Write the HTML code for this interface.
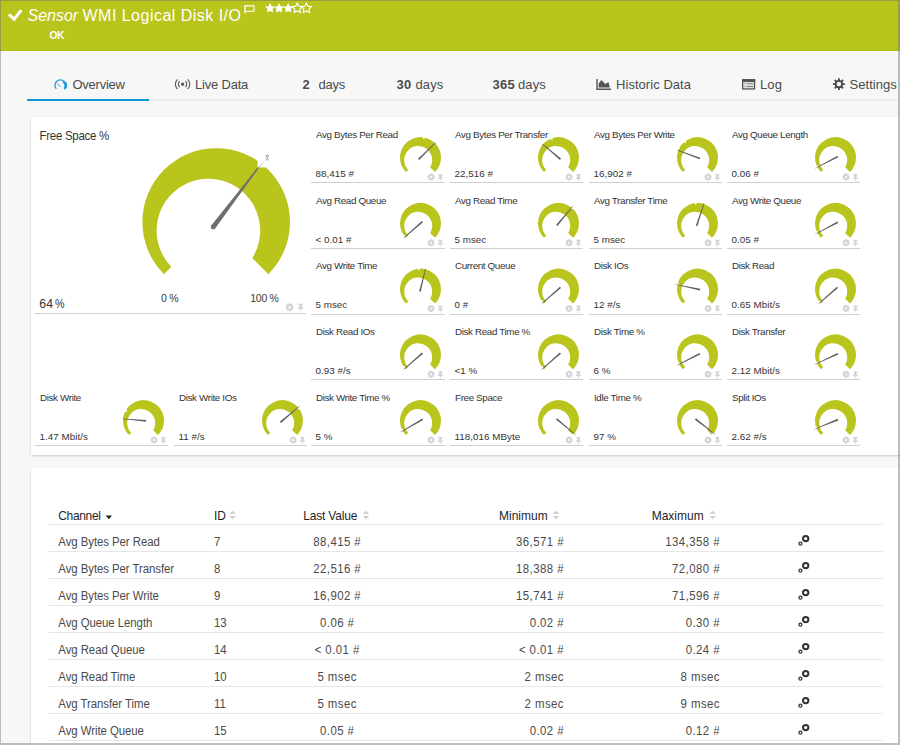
<!DOCTYPE html><html><head><meta charset="utf-8"><style>
*{box-sizing:border-box}
html,body{margin:0;padding:0;width:900px;height:745px;overflow:hidden;background:#f7f7f7;font-family:"Liberation Sans",sans-serif;}
.a{position:absolute;white-space:nowrap;line-height:1}
#frame{position:absolute;left:0;top:0;width:900px;height:745px;border-style:solid;border-color:rgba(110,110,110,.45);border-width:1px 2px 2px 1px;pointer-events:none;z-index:10}
#hdr{position:absolute;left:0;top:0;width:900px;height:51px;background:#b9c41c;border-bottom:1px solid #b3bd12}
.tab{position:absolute;font-size:13px;color:#4b4b4b;line-height:1}
.tab b{color:#4b4b4b}
.panel{position:absolute;background:#fff;box-shadow:0 1px 2px rgba(0,0,0,.18)}
.gt{position:absolute;font-size:9.8px;color:#333;letter-spacing:-0.35px;line-height:1;white-space:nowrap}
.gl{position:absolute;height:1px;background:#cfcfcf}
.th{position:absolute;font-size:12px;color:#1f1f2e;transform:scaleY(1.05);transform-origin:0 10.2px;line-height:1;white-space:nowrap}
.td{position:absolute;font-size:11.4px;color:#4a4a4a;transform:scaleY(1.15);transform-origin:0 9.65px;line-height:1;white-space:nowrap}
.tl{position:absolute;left:49px;width:834px;height:1px;background:#e6e6e6}
</style></head><body>

<div id="hdr"></div>
<svg class="a" style="left:0;top:0" width="900" height="51"><path d="M8.9,14.3 L14.1,19.2 L21.3,10.1" fill="none" stroke="#fff" stroke-width="3"/></svg>
<div class="a" style="left:27.5px;top:8px;font-size:16px;color:#fff"><i style="letter-spacing:0px">Sensor</i></div><div class="a" style="left:82.5px;top:8px;font-size:16px;color:#fff;letter-spacing:0.48px">WMI Logical Disk I/O</div>
<div class="a" style="left:49.6px;top:30.6px;font-size:10.2px;color:#fff;font-weight:bold;letter-spacing:-0.4px">OK</div>
<svg class="a" style="left:242.6px;top:4px" width="14" height="12"><path d="M2,1 V9.6" fill="none" stroke="#fff" stroke-width="1.4"/><path d="M2.6,1.9 H11 V7.2 H2.6" fill="none" stroke="#fff" stroke-width="1.1"/></svg>
<svg class="a" style="left:262px;top:0px" width="60" height="20"><polygon points="8.00,3.00 6.44,6.16 2.96,6.66 5.48,9.12 4.88,12.59 8.00,10.95 11.12,12.59 10.52,9.12 13.04,6.66 9.56,6.16" fill="#fff"/><polygon points="17.10,3.00 15.54,6.16 12.06,6.66 14.58,9.12 13.98,12.59 17.10,10.95 20.22,12.59 19.62,9.12 22.14,6.66 18.66,6.16" fill="#fff"/><polygon points="26.20,3.00 24.64,6.16 21.16,6.66 23.68,9.12 23.08,12.59 26.20,10.95 29.32,12.59 28.72,9.12 31.24,6.66 27.76,6.16" fill="#fff"/><polygon points="35.30,3.00 33.74,6.16 30.26,6.66 32.78,9.12 32.18,12.59 35.30,10.95 38.42,12.59 37.82,9.12 40.34,6.66 36.86,6.16" fill="none" stroke="#fff" stroke-width="1.1"/><polygon points="44.40,3.00 42.84,6.16 39.36,6.66 41.88,9.12 41.28,12.59 44.40,10.95 47.52,12.59 46.92,9.12 49.44,6.66 45.96,6.16" fill="none" stroke="#fff" stroke-width="1.1"/></svg>
<div class="a" style="left:27px;top:99px;width:871px;height:2px;background:#ebebeb"></div>
<div class="a" style="left:27px;top:99px;width:122px;height:2px;background:#0898d6"></div>
<svg class="a" style="left:53px;top:78px" width="16" height="13"><path d="M3.3,10.9 A5.4,5.4 0 1 1 11.4,10.9" fill="none" stroke="#1a9bd7" stroke-width="1.3"/><path d="M11.4,10.9 A5.4,5.4 0 0 0 12.4,5" fill="none" stroke="#1a9bd7" stroke-width="2.4"/><path d="M10,3.6 A5.4,5.4 0 0 1 12.9,7.5" fill="none" stroke="#1a9bd7" stroke-width="2.2"/><line x1="7.6" y1="8.6" x2="4.4" y2="5.8" stroke="#1a9bd7" stroke-width="1"/></svg>
<div class="tab" style="left:72.5px;top:78px;letter-spacing:-0.25px">Overview</div>
<svg class="a" style="left:175px;top:78px" width="16" height="13"><circle cx="7.6" cy="6.2" r="1.6" fill="#555"/><path d="M4.8,3.2 A4,4 0 0 0 4.8,9.2 M10.4,3.2 A4,4 0 0 1 10.4,9.2 M2.6,1.4 A6.4,6.4 0 0 0 2.6,11 M12.6,1.4 A6.4,6.4 0 0 1 12.6,11" fill="none" stroke="#555" stroke-width="1.1"/></svg>
<div class="tab" style="left:195px;top:78px;letter-spacing:-0.2px">Live Data</div>
<div class="tab" style="left:302.5px;top:78px"><b>2</b></div><div class="tab" style="left:318.5px;top:78px;letter-spacing:-0.2px">days</div>
<div class="tab" style="left:396.5px;top:78px;letter-spacing:0.2px"><b>30</b></div><div class="tab" style="left:415.5px;top:78px;letter-spacing:0.1px">days</div>
<div class="tab" style="left:492.5px;top:78px;letter-spacing:0.3px"><b>365</b></div><div class="tab" style="left:518px;top:78px;letter-spacing:0.1px">days</div>
<svg class="a" style="left:596px;top:78px" width="16" height="13"><path d="M1,1 V11.3 H15" fill="none" stroke="#555" stroke-width="1.4"/><path d="M2.6,9.6 L2.6,5.8 L5.3,2.1 L9.3,6.1 L12.5,3.9 L13.8,9.6Z" fill="#555"/></svg>
<div class="tab" style="left:616px;top:78px;letter-spacing:0.05px">Historic Data</div>
<svg class="a" style="left:742px;top:78px" width="15" height="13"><rect x="0.65" y="1.65" width="11.9" height="9.3" fill="#e0e0e0" stroke="#555" stroke-width="1.3"/><rect x="0.6" y="1.4" width="12.6" height="2.6" fill="#555"/><line x1="4.8" y1="5.7" x2="11" y2="5.7" stroke="#777" stroke-width="0.9"/><line x1="4.8" y1="8.5" x2="11" y2="8.5" stroke="#777" stroke-width="0.9"/><line x1="2.5" y1="5.7" x2="3.8" y2="5.7" stroke="#999" stroke-width="0.9"/><line x1="2.5" y1="8.5" x2="3.8" y2="8.5" stroke="#999" stroke-width="0.9"/></svg>
<div class="tab" style="left:760px;top:78px;letter-spacing:0.1px">Log</div>
<svg class="a" style="left:832px;top:77px" width="15" height="14"><line x1="9.85" y1="7.10" x2="12.80" y2="7.10" stroke="#444" stroke-width="1.77"/><line x1="8.99" y1="9.19" x2="11.07" y2="11.27" stroke="#444" stroke-width="1.77"/><line x1="6.90" y1="10.05" x2="6.90" y2="13.00" stroke="#444" stroke-width="1.77"/><line x1="4.81" y1="9.19" x2="2.73" y2="11.27" stroke="#444" stroke-width="1.77"/><line x1="3.95" y1="7.10" x2="1.00" y2="7.10" stroke="#444" stroke-width="1.77"/><line x1="4.81" y1="5.01" x2="2.73" y2="2.93" stroke="#444" stroke-width="1.77"/><line x1="6.90" y1="4.15" x2="6.90" y2="1.20" stroke="#444" stroke-width="1.77"/><line x1="8.99" y1="5.01" x2="11.07" y2="2.93" stroke="#444" stroke-width="1.77"/><circle cx="6.90" cy="7.10" r="3.25" fill="none" stroke="#444" stroke-width="1.77"/></svg>
<div class="tab" style="left:849.5px;top:78px;letter-spacing:0.05px">Settings</div>
<div class="panel" style="left:31px;top:117px;width:880px;height:338px"></div>
<div class="gl" style="left:311.0px;top:182.0px;width:133.8px"></div>
<div class="gt" style="left:316.0px;top:129.9px">Avg Bytes Per Read</div>
<div class="gt" style="left:316.0px;top:168.8px;font-size:9.8px;letter-spacing:0.05px;margin-left:-0.6px">88,415 #</div>
<div class="gl" style="left:450.0px;top:182.0px;width:132.8px"></div>
<div class="gt" style="left:455.0px;top:129.9px">Avg Bytes Per Transfer</div>
<div class="gt" style="left:455.0px;top:168.8px;font-size:9.8px;letter-spacing:0.05px;margin-left:-0.6px">22,516 #</div>
<div class="gl" style="left:589.0px;top:182.0px;width:132.8px"></div>
<div class="gt" style="left:594.0px;top:129.9px">Avg Bytes Per Write</div>
<div class="gt" style="left:594.0px;top:168.8px;font-size:9.8px;letter-spacing:0.05px;margin-left:-0.6px">16,902 #</div>
<div class="gl" style="left:727.0px;top:182.0px;width:132.8px"></div>
<div class="gt" style="left:732.0px;top:129.9px">Avg Queue Length</div>
<div class="gt" style="left:732.0px;top:168.8px;font-size:9.8px;letter-spacing:0.05px;margin-left:-0.6px">0.06 #</div>
<div class="gl" style="left:311.0px;top:247.8px;width:133.8px"></div>
<div class="gt" style="left:316.0px;top:195.7px">Avg Read Queue</div>
<div class="gt" style="left:316.0px;top:234.6px;font-size:9.8px;letter-spacing:0.05px;margin-left:-0.6px">&lt; 0.01 #</div>
<div class="gl" style="left:450.0px;top:247.8px;width:132.8px"></div>
<div class="gt" style="left:455.0px;top:195.7px">Avg Read Time</div>
<div class="gt" style="left:455.0px;top:234.6px;font-size:9.8px;letter-spacing:0.05px;margin-left:-0.6px">5 msec</div>
<div class="gl" style="left:589.0px;top:247.8px;width:132.8px"></div>
<div class="gt" style="left:594.0px;top:195.7px">Avg Transfer Time</div>
<div class="gt" style="left:594.0px;top:234.6px;font-size:9.8px;letter-spacing:0.05px;margin-left:-0.6px">5 msec</div>
<div class="gl" style="left:727.0px;top:247.8px;width:132.8px"></div>
<div class="gt" style="left:732.0px;top:195.7px">Avg Write Queue</div>
<div class="gt" style="left:732.0px;top:234.6px;font-size:9.8px;letter-spacing:0.05px;margin-left:-0.6px">0.05 #</div>
<div class="gl" style="left:311.0px;top:313.5px;width:133.8px"></div>
<div class="gt" style="left:316.0px;top:261.4px">Avg Write Time</div>
<div class="gt" style="left:316.0px;top:300.3px;font-size:9.8px;letter-spacing:0.05px;margin-left:-0.6px">5 msec</div>
<div class="gl" style="left:450.0px;top:313.5px;width:132.8px"></div>
<div class="gt" style="left:455.0px;top:261.4px">Current Queue</div>
<div class="gt" style="left:455.0px;top:300.3px;font-size:9.8px;letter-spacing:0.05px;margin-left:-0.6px">0 #</div>
<div class="gl" style="left:589.0px;top:313.5px;width:132.8px"></div>
<div class="gt" style="left:594.0px;top:261.4px">Disk IOs</div>
<div class="gt" style="left:594.0px;top:300.3px;font-size:9.8px;letter-spacing:0.05px;margin-left:-0.6px">12 #/s</div>
<div class="gl" style="left:727.0px;top:313.5px;width:132.8px"></div>
<div class="gt" style="left:732.0px;top:261.4px">Disk Read</div>
<div class="gt" style="left:732.0px;top:300.3px;font-size:9.8px;letter-spacing:0.05px;margin-left:-0.6px">0.65 Mbit/s</div>
<div class="gl" style="left:311.0px;top:379.2px;width:133.8px"></div>
<div class="gt" style="left:316.0px;top:327.1px">Disk Read IOs</div>
<div class="gt" style="left:316.0px;top:366.0px;font-size:9.8px;letter-spacing:0.05px;margin-left:-0.6px">0.93 #/s</div>
<div class="gl" style="left:450.0px;top:379.2px;width:132.8px"></div>
<div class="gt" style="left:455.0px;top:327.1px">Disk Read Time %</div>
<div class="gt" style="left:455.0px;top:366.0px;font-size:9.8px;letter-spacing:0.05px;margin-left:-0.6px">&lt;1 %</div>
<div class="gl" style="left:589.0px;top:379.2px;width:132.8px"></div>
<div class="gt" style="left:594.0px;top:327.1px">Disk Time %</div>
<div class="gt" style="left:594.0px;top:366.0px;font-size:9.8px;letter-spacing:0.05px;margin-left:-0.6px">6 %</div>
<div class="gl" style="left:727.0px;top:379.2px;width:132.8px"></div>
<div class="gt" style="left:732.0px;top:327.1px">Disk Transfer</div>
<div class="gt" style="left:732.0px;top:366.0px;font-size:9.8px;letter-spacing:0.05px;margin-left:-0.6px">2.12 Mbit/s</div>
<div class="gl" style="left:35.0px;top:445.0px;width:132.8px"></div>
<div class="gt" style="left:40.0px;top:392.9px">Disk Write</div>
<div class="gt" style="left:40.0px;top:431.8px;font-size:9.8px;letter-spacing:0.05px;margin-left:-0.6px">1.47 Mbit/s</div>
<div class="gl" style="left:174.0px;top:445.0px;width:132.8px"></div>
<div class="gt" style="left:179.0px;top:392.9px">Disk Write IOs</div>
<div class="gt" style="left:179.0px;top:431.8px;font-size:9.8px;letter-spacing:0.05px;margin-left:-0.6px">11 #/s</div>
<div class="gl" style="left:311.0px;top:445.0px;width:133.8px"></div>
<div class="gt" style="left:316.0px;top:392.9px">Disk Write Time %</div>
<div class="gt" style="left:316.0px;top:431.8px;font-size:9.8px;letter-spacing:0.05px;margin-left:-0.6px">5 %</div>
<div class="gl" style="left:450.0px;top:445.0px;width:132.8px"></div>
<div class="gt" style="left:455.0px;top:392.9px">Free Space</div>
<div class="gt" style="left:455.0px;top:431.8px;font-size:9.8px;letter-spacing:0.05px;margin-left:-0.6px">118,016 MByte</div>
<div class="gl" style="left:589.0px;top:445.0px;width:132.8px"></div>
<div class="gt" style="left:594.0px;top:392.9px">Idle Time %</div>
<div class="gt" style="left:594.0px;top:431.8px;font-size:9.8px;letter-spacing:0.05px;margin-left:-0.6px">97 %</div>
<div class="gl" style="left:727.0px;top:445.0px;width:132.8px"></div>
<div class="gt" style="left:732.0px;top:392.9px">Split IOs</div>
<div class="gt" style="left:732.0px;top:431.8px;font-size:9.8px;letter-spacing:0.05px;margin-left:-0.6px">2.62 #/s</div>
<div class="gl" style="left:35px;top:313px;width:271px"></div>
<div class="a" style="left:39.6px;top:130.5px;font-size:11.5px;color:#333;letter-spacing:-0.3px;transform:scaleY(1.16);transform-origin:0 9.7px">Free Space %</div>
<div class="a" style="left:39.3px;top:297.5px;font-size:12.2px;color:#333;letter-spacing:0.1px">64</div><div class="a" style="left:55px;top:297.5px;font-size:12.2px;color:#333;transform:scaleX(0.88);transform-origin:0 0">%</div>
<div class="a" style="left:161px;top:293px;font-size:10.5px;color:#3a3a3a;letter-spacing:-0.2px">0 %</div>
<div class="a" style="left:250.3px;top:293px;font-size:10.5px;color:#3a3a3a;letter-spacing:-0.3px">100 %</div>
<div class="panel" style="left:31px;top:467.5px;width:880px;height:300px"></div>
<svg class="a" style="left:0;top:0" width="900" height="745">
<path d="M164.02,274.18 A73.8,73.8 0 1 1 268.38,274.18 L252.30,258.10 A51.8,51.8 0 1 0 171.37,266.83 Z" fill="#b9c41c"/>
<rect x="257.7" y="140" width="30" height="27.4" fill="#fff"/>
<path d="M215.11,228.45 L258.56,168.42 L257.44,167.58 L211.29,225.55 Z" fill="#6e6e6e"/><circle cx="213.20" cy="227.00" r="2.4" fill="#6e6e6e"/>
<line x1="258" y1="168" x2="263.8" y2="162" stroke="#888" stroke-width="0.9" stroke-dasharray="1 0.6"/>
<path d="M265.6,155.4 H269 M266,155.6 L268.8,160.6 M268.6,155.6 L265.8,160.6" stroke="#8a9aa8" stroke-width="0.8" fill="none"/>
<line x1="289.60" y1="307.30" x2="293.50" y2="307.30" stroke="#d4d4d4" stroke-width="2.15"/><line x1="289.60" y1="307.30" x2="292.36" y2="310.06" stroke="#d4d4d4" stroke-width="2.15"/><line x1="289.60" y1="307.30" x2="289.60" y2="311.20" stroke="#d4d4d4" stroke-width="2.15"/><line x1="289.60" y1="307.30" x2="286.84" y2="310.06" stroke="#d4d4d4" stroke-width="2.15"/><line x1="289.60" y1="307.30" x2="285.70" y2="307.30" stroke="#d4d4d4" stroke-width="2.15"/><line x1="289.60" y1="307.30" x2="286.84" y2="304.54" stroke="#d4d4d4" stroke-width="2.15"/><line x1="289.60" y1="307.30" x2="289.60" y2="303.40" stroke="#d4d4d4" stroke-width="2.15"/><line x1="289.60" y1="307.30" x2="292.36" y2="304.54" stroke="#d4d4d4" stroke-width="2.15"/><circle cx="289.60" cy="307.30" r="2.81" fill="#d4d4d4"/><circle cx="289.60" cy="307.30" r="1.17" fill="#fff"/><rect x="298.37" y="303.70" width="4.65" height="1.44" fill="#d4d4d4"/><rect x="299.26" y="304.81" width="2.88" height="3.32" fill="#d4d4d4"/><rect x="297.93" y="307.69" width="5.54" height="1.44" fill="#d4d4d4"/><line x1="300.70" y1="309.02" x2="300.70" y2="311.46" stroke="#d4d4d4" stroke-width="1.00"/>
<path d="M406.00,172.10 A20.5,20.5 0 1 1 435.00,172.10 L430.17,167.27 A14.0,14.0 0 1 0 408.25,169.85 Z" fill="#b9c41c"/><polygon points="422.07,135.15 423.68,139.58 426.70,135.97" fill="#fff"/><path d="M419.26,160.04 L435.60,143.00 L435.10,142.50 L418.06,158.84Z" fill="#5e5e5e"/>
<line x1="431.10" y1="177.00" x2="434.60" y2="177.00" stroke="#d4d4d4" stroke-width="1.93"/><line x1="431.10" y1="177.00" x2="433.57" y2="179.47" stroke="#d4d4d4" stroke-width="1.93"/><line x1="431.10" y1="177.00" x2="431.10" y2="180.50" stroke="#d4d4d4" stroke-width="1.93"/><line x1="431.10" y1="177.00" x2="428.63" y2="179.47" stroke="#d4d4d4" stroke-width="1.93"/><line x1="431.10" y1="177.00" x2="427.60" y2="177.00" stroke="#d4d4d4" stroke-width="1.93"/><line x1="431.10" y1="177.00" x2="428.63" y2="174.53" stroke="#d4d4d4" stroke-width="1.93"/><line x1="431.10" y1="177.00" x2="431.10" y2="173.50" stroke="#d4d4d4" stroke-width="1.93"/><line x1="431.10" y1="177.00" x2="433.57" y2="174.53" stroke="#d4d4d4" stroke-width="1.93"/><circle cx="431.10" cy="177.00" r="2.52" fill="#d4d4d4"/><circle cx="431.10" cy="177.00" r="1.05" fill="#fff"/><rect x="438.30" y="174.00" width="4.20" height="1.30" fill="#d4d4d4"/><rect x="439.10" y="175.00" width="2.60" height="3.00" fill="#d4d4d4"/><rect x="437.90" y="177.60" width="5.00" height="1.30" fill="#d4d4d4"/><line x1="440.40" y1="178.80" x2="440.40" y2="181.00" stroke="#d4d4d4" stroke-width="0.90"/>
<path d="M544.00,172.10 A20.5,20.5 0 1 1 573.00,172.10 L568.17,167.27 A14.0,14.0 0 1 0 546.25,169.85 Z" fill="#b9c41c"/><polygon points="548.64,137.38 552.24,140.40 553.06,135.77" fill="#fff"/><path d="M561.04,158.62 L542.64,143.83 L542.19,144.37 L559.95,159.92Z" fill="#5e5e5e"/>
<line x1="569.10" y1="177.00" x2="572.60" y2="177.00" stroke="#d4d4d4" stroke-width="1.93"/><line x1="569.10" y1="177.00" x2="571.57" y2="179.47" stroke="#d4d4d4" stroke-width="1.93"/><line x1="569.10" y1="177.00" x2="569.10" y2="180.50" stroke="#d4d4d4" stroke-width="1.93"/><line x1="569.10" y1="177.00" x2="566.63" y2="179.47" stroke="#d4d4d4" stroke-width="1.93"/><line x1="569.10" y1="177.00" x2="565.60" y2="177.00" stroke="#d4d4d4" stroke-width="1.93"/><line x1="569.10" y1="177.00" x2="566.63" y2="174.53" stroke="#d4d4d4" stroke-width="1.93"/><line x1="569.10" y1="177.00" x2="569.10" y2="173.50" stroke="#d4d4d4" stroke-width="1.93"/><line x1="569.10" y1="177.00" x2="571.57" y2="174.53" stroke="#d4d4d4" stroke-width="1.93"/><circle cx="569.10" cy="177.00" r="2.52" fill="#d4d4d4"/><circle cx="569.10" cy="177.00" r="1.05" fill="#fff"/><rect x="576.30" y="174.00" width="4.20" height="1.30" fill="#d4d4d4"/><rect x="577.10" y="175.00" width="2.60" height="3.00" fill="#d4d4d4"/><rect x="575.90" y="177.60" width="5.00" height="1.30" fill="#d4d4d4"/><line x1="578.40" y1="178.80" x2="578.40" y2="181.00" stroke="#d4d4d4" stroke-width="0.90"/>
<path d="M683.00,172.10 A20.5,20.5 0 1 1 712.00,172.10 L707.17,167.27 A14.0,14.0 0 1 0 685.25,169.85 Z" fill="#b9c41c"/><polygon points="681.70,141.58 686.08,143.30 685.38,138.64" fill="#fff"/><path d="M700.23,157.69 L677.89,150.09 L677.65,150.75 L699.65,159.29Z" fill="#5e5e5e"/>
<line x1="708.10" y1="177.00" x2="711.60" y2="177.00" stroke="#d4d4d4" stroke-width="1.93"/><line x1="708.10" y1="177.00" x2="710.57" y2="179.47" stroke="#d4d4d4" stroke-width="1.93"/><line x1="708.10" y1="177.00" x2="708.10" y2="180.50" stroke="#d4d4d4" stroke-width="1.93"/><line x1="708.10" y1="177.00" x2="705.63" y2="179.47" stroke="#d4d4d4" stroke-width="1.93"/><line x1="708.10" y1="177.00" x2="704.60" y2="177.00" stroke="#d4d4d4" stroke-width="1.93"/><line x1="708.10" y1="177.00" x2="705.63" y2="174.53" stroke="#d4d4d4" stroke-width="1.93"/><line x1="708.10" y1="177.00" x2="708.10" y2="173.50" stroke="#d4d4d4" stroke-width="1.93"/><line x1="708.10" y1="177.00" x2="710.57" y2="174.53" stroke="#d4d4d4" stroke-width="1.93"/><circle cx="708.10" cy="177.00" r="2.52" fill="#d4d4d4"/><circle cx="708.10" cy="177.00" r="1.05" fill="#fff"/><rect x="715.30" y="174.00" width="4.20" height="1.30" fill="#d4d4d4"/><rect x="716.10" y="175.00" width="2.60" height="3.00" fill="#d4d4d4"/><rect x="714.90" y="177.60" width="5.00" height="1.30" fill="#d4d4d4"/><line x1="717.40" y1="178.80" x2="717.40" y2="181.00" stroke="#d4d4d4" stroke-width="0.90"/>
<path d="M821.00,172.10 A20.5,20.5 0 1 1 850.00,172.10 L845.17,167.27 A14.0,14.0 0 1 0 823.25,169.85 Z" fill="#b9c41c"/><polygon points="814.31,168.87 818.99,166.38 816.27,164.98 813.09,166.20" fill="#fff"/><line x1="816.96" y1="167.46" x2="815.19" y2="168.40" stroke="#999" stroke-width="0.6"/><path d="M837.40,155.63 L816.79,167.15 L817.12,167.77 L838.19,157.13Z" fill="#5e5e5e"/>
<line x1="846.10" y1="177.00" x2="849.60" y2="177.00" stroke="#d4d4d4" stroke-width="1.93"/><line x1="846.10" y1="177.00" x2="848.57" y2="179.47" stroke="#d4d4d4" stroke-width="1.93"/><line x1="846.10" y1="177.00" x2="846.10" y2="180.50" stroke="#d4d4d4" stroke-width="1.93"/><line x1="846.10" y1="177.00" x2="843.63" y2="179.47" stroke="#d4d4d4" stroke-width="1.93"/><line x1="846.10" y1="177.00" x2="842.60" y2="177.00" stroke="#d4d4d4" stroke-width="1.93"/><line x1="846.10" y1="177.00" x2="843.63" y2="174.53" stroke="#d4d4d4" stroke-width="1.93"/><line x1="846.10" y1="177.00" x2="846.10" y2="173.50" stroke="#d4d4d4" stroke-width="1.93"/><line x1="846.10" y1="177.00" x2="848.57" y2="174.53" stroke="#d4d4d4" stroke-width="1.93"/><circle cx="846.10" cy="177.00" r="2.52" fill="#d4d4d4"/><circle cx="846.10" cy="177.00" r="1.05" fill="#fff"/><rect x="853.30" y="174.00" width="4.20" height="1.30" fill="#d4d4d4"/><rect x="854.10" y="175.00" width="2.60" height="3.00" fill="#d4d4d4"/><rect x="852.90" y="177.60" width="5.00" height="1.30" fill="#d4d4d4"/><line x1="855.40" y1="178.80" x2="855.40" y2="181.00" stroke="#d4d4d4" stroke-width="0.90"/>
<path d="M406.00,237.85 A20.5,20.5 0 1 1 435.00,237.85 L430.17,233.02 A14.0,14.0 0 1 0 408.25,235.60 Z" fill="#b9c41c"/><polygon points="402.39,239.10 406.39,235.62 403.42,234.87 400.60,236.77" fill="#fff"/><line x1="404.65" y1="237.13" x2="403.14" y2="238.44" stroke="#999" stroke-width="0.6"/><path d="M421.90,221.00 L404.42,236.86 L404.88,237.39 L423.02,222.29Z" fill="#5e5e5e"/>
<line x1="431.10" y1="242.75" x2="434.60" y2="242.75" stroke="#d4d4d4" stroke-width="1.93"/><line x1="431.10" y1="242.75" x2="433.57" y2="245.22" stroke="#d4d4d4" stroke-width="1.93"/><line x1="431.10" y1="242.75" x2="431.10" y2="246.25" stroke="#d4d4d4" stroke-width="1.93"/><line x1="431.10" y1="242.75" x2="428.63" y2="245.22" stroke="#d4d4d4" stroke-width="1.93"/><line x1="431.10" y1="242.75" x2="427.60" y2="242.75" stroke="#d4d4d4" stroke-width="1.93"/><line x1="431.10" y1="242.75" x2="428.63" y2="240.28" stroke="#d4d4d4" stroke-width="1.93"/><line x1="431.10" y1="242.75" x2="431.10" y2="239.25" stroke="#d4d4d4" stroke-width="1.93"/><line x1="431.10" y1="242.75" x2="433.57" y2="240.28" stroke="#d4d4d4" stroke-width="1.93"/><circle cx="431.10" cy="242.75" r="2.52" fill="#d4d4d4"/><circle cx="431.10" cy="242.75" r="1.05" fill="#fff"/><rect x="438.30" y="239.75" width="4.20" height="1.30" fill="#d4d4d4"/><rect x="439.10" y="240.75" width="2.60" height="3.00" fill="#d4d4d4"/><rect x="437.90" y="243.35" width="5.00" height="1.30" fill="#d4d4d4"/><line x1="440.40" y1="244.55" x2="440.40" y2="246.75" stroke="#d4d4d4" stroke-width="0.90"/>
<path d="M544.00,237.85 A20.5,20.5 0 1 1 573.00,237.85 L568.17,233.02 A14.0,14.0 0 1 0 546.25,235.60 Z" fill="#b9c41c"/><polygon points="573.93,204.96 570.52,209.02 573.57,209.30 576.05,206.98" fill="#fff"/><line x1="572.00" y1="207.26" x2="573.28" y2="205.73" stroke="#999" stroke-width="0.6"/><path d="M557.48,225.89 L572.27,207.49 L571.73,207.04 L556.18,224.80Z" fill="#5e5e5e"/>
<line x1="569.10" y1="242.75" x2="572.60" y2="242.75" stroke="#d4d4d4" stroke-width="1.93"/><line x1="569.10" y1="242.75" x2="571.57" y2="245.22" stroke="#d4d4d4" stroke-width="1.93"/><line x1="569.10" y1="242.75" x2="569.10" y2="246.25" stroke="#d4d4d4" stroke-width="1.93"/><line x1="569.10" y1="242.75" x2="566.63" y2="245.22" stroke="#d4d4d4" stroke-width="1.93"/><line x1="569.10" y1="242.75" x2="565.60" y2="242.75" stroke="#d4d4d4" stroke-width="1.93"/><line x1="569.10" y1="242.75" x2="566.63" y2="240.28" stroke="#d4d4d4" stroke-width="1.93"/><line x1="569.10" y1="242.75" x2="569.10" y2="239.25" stroke="#d4d4d4" stroke-width="1.93"/><line x1="569.10" y1="242.75" x2="571.57" y2="240.28" stroke="#d4d4d4" stroke-width="1.93"/><circle cx="569.10" cy="242.75" r="2.52" fill="#d4d4d4"/><circle cx="569.10" cy="242.75" r="1.05" fill="#fff"/><rect x="576.30" y="239.75" width="4.20" height="1.30" fill="#d4d4d4"/><rect x="577.10" y="240.75" width="2.60" height="3.00" fill="#d4d4d4"/><rect x="575.90" y="243.35" width="5.00" height="1.30" fill="#d4d4d4"/><line x1="578.40" y1="244.55" x2="578.40" y2="246.75" stroke="#d4d4d4" stroke-width="0.90"/>
<path d="M683.00,237.85 A20.5,20.5 0 1 1 712.00,237.85 L707.17,233.02 A14.0,14.0 0 1 0 685.25,235.60 Z" fill="#b9c41c"/><polygon points="693.21,201.26 695.91,205.12 697.89,200.85" fill="#fff"/><path d="M697.50,226.09 L704.32,203.49 L703.66,203.27 L695.89,225.56Z" fill="#5e5e5e"/>
<line x1="708.10" y1="242.75" x2="711.60" y2="242.75" stroke="#d4d4d4" stroke-width="1.93"/><line x1="708.10" y1="242.75" x2="710.57" y2="245.22" stroke="#d4d4d4" stroke-width="1.93"/><line x1="708.10" y1="242.75" x2="708.10" y2="246.25" stroke="#d4d4d4" stroke-width="1.93"/><line x1="708.10" y1="242.75" x2="705.63" y2="245.22" stroke="#d4d4d4" stroke-width="1.93"/><line x1="708.10" y1="242.75" x2="704.60" y2="242.75" stroke="#d4d4d4" stroke-width="1.93"/><line x1="708.10" y1="242.75" x2="705.63" y2="240.28" stroke="#d4d4d4" stroke-width="1.93"/><line x1="708.10" y1="242.75" x2="708.10" y2="239.25" stroke="#d4d4d4" stroke-width="1.93"/><line x1="708.10" y1="242.75" x2="710.57" y2="240.28" stroke="#d4d4d4" stroke-width="1.93"/><circle cx="708.10" cy="242.75" r="2.52" fill="#d4d4d4"/><circle cx="708.10" cy="242.75" r="1.05" fill="#fff"/><rect x="715.30" y="239.75" width="4.20" height="1.30" fill="#d4d4d4"/><rect x="716.10" y="240.75" width="2.60" height="3.00" fill="#d4d4d4"/><rect x="714.90" y="243.35" width="5.00" height="1.30" fill="#d4d4d4"/><line x1="717.40" y1="244.55" x2="717.40" y2="246.75" stroke="#d4d4d4" stroke-width="0.90"/>
<path d="M821.00,237.85 A20.5,20.5 0 1 1 850.00,237.85 L845.17,233.02 A14.0,14.0 0 1 0 823.25,235.60 Z" fill="#b9c41c"/><polygon points="814.31,234.62 818.99,232.13 816.27,230.73 813.09,231.95" fill="#fff"/><line x1="816.96" y1="233.21" x2="815.19" y2="234.15" stroke="#999" stroke-width="0.6"/><path d="M837.40,221.38 L816.79,232.90 L817.12,233.52 L838.19,222.88Z" fill="#5e5e5e"/>
<line x1="846.10" y1="242.75" x2="849.60" y2="242.75" stroke="#d4d4d4" stroke-width="1.93"/><line x1="846.10" y1="242.75" x2="848.57" y2="245.22" stroke="#d4d4d4" stroke-width="1.93"/><line x1="846.10" y1="242.75" x2="846.10" y2="246.25" stroke="#d4d4d4" stroke-width="1.93"/><line x1="846.10" y1="242.75" x2="843.63" y2="245.22" stroke="#d4d4d4" stroke-width="1.93"/><line x1="846.10" y1="242.75" x2="842.60" y2="242.75" stroke="#d4d4d4" stroke-width="1.93"/><line x1="846.10" y1="242.75" x2="843.63" y2="240.28" stroke="#d4d4d4" stroke-width="1.93"/><line x1="846.10" y1="242.75" x2="846.10" y2="239.25" stroke="#d4d4d4" stroke-width="1.93"/><line x1="846.10" y1="242.75" x2="848.57" y2="240.28" stroke="#d4d4d4" stroke-width="1.93"/><circle cx="846.10" cy="242.75" r="2.52" fill="#d4d4d4"/><circle cx="846.10" cy="242.75" r="1.05" fill="#fff"/><rect x="853.30" y="239.75" width="4.20" height="1.30" fill="#d4d4d4"/><rect x="854.10" y="240.75" width="2.60" height="3.00" fill="#d4d4d4"/><rect x="852.90" y="243.35" width="5.00" height="1.30" fill="#d4d4d4"/><line x1="855.40" y1="244.55" x2="855.40" y2="246.75" stroke="#d4d4d4" stroke-width="0.90"/>
<path d="M406.00,303.60 A20.5,20.5 0 1 1 435.00,303.60 L430.17,298.77 A14.0,14.0 0 1 0 408.25,301.35 Z" fill="#b9c41c"/><polygon points="416.21,267.01 418.91,270.87 420.89,266.60" fill="#fff"/><path d="M420.70,291.83 L425.92,268.81 L425.24,268.64 L419.05,291.42Z" fill="#5e5e5e"/>
<line x1="431.10" y1="308.50" x2="434.60" y2="308.50" stroke="#d4d4d4" stroke-width="1.93"/><line x1="431.10" y1="308.50" x2="433.57" y2="310.97" stroke="#d4d4d4" stroke-width="1.93"/><line x1="431.10" y1="308.50" x2="431.10" y2="312.00" stroke="#d4d4d4" stroke-width="1.93"/><line x1="431.10" y1="308.50" x2="428.63" y2="310.97" stroke="#d4d4d4" stroke-width="1.93"/><line x1="431.10" y1="308.50" x2="427.60" y2="308.50" stroke="#d4d4d4" stroke-width="1.93"/><line x1="431.10" y1="308.50" x2="428.63" y2="306.03" stroke="#d4d4d4" stroke-width="1.93"/><line x1="431.10" y1="308.50" x2="431.10" y2="305.00" stroke="#d4d4d4" stroke-width="1.93"/><line x1="431.10" y1="308.50" x2="433.57" y2="306.03" stroke="#d4d4d4" stroke-width="1.93"/><circle cx="431.10" cy="308.50" r="2.52" fill="#d4d4d4"/><circle cx="431.10" cy="308.50" r="1.05" fill="#fff"/><rect x="438.30" y="305.50" width="4.20" height="1.30" fill="#d4d4d4"/><rect x="439.10" y="306.50" width="2.60" height="3.00" fill="#d4d4d4"/><rect x="437.90" y="309.10" width="5.00" height="1.30" fill="#d4d4d4"/><line x1="440.40" y1="310.30" x2="440.40" y2="312.50" stroke="#d4d4d4" stroke-width="0.90"/>
<path d="M544.00,303.60 A20.5,20.5 0 1 1 573.00,303.60 L568.17,298.77 A14.0,14.0 0 1 0 546.25,301.35 Z" fill="#b9c41c"/><polygon points="540.39,304.85 544.39,301.37 541.42,300.62 538.60,302.52" fill="#fff"/><line x1="542.65" y1="302.88" x2="541.14" y2="304.19" stroke="#999" stroke-width="0.6"/><path d="M559.90,286.75 L542.42,302.61 L542.88,303.14 L561.02,288.04Z" fill="#5e5e5e"/>
<line x1="569.10" y1="308.50" x2="572.60" y2="308.50" stroke="#d4d4d4" stroke-width="1.93"/><line x1="569.10" y1="308.50" x2="571.57" y2="310.97" stroke="#d4d4d4" stroke-width="1.93"/><line x1="569.10" y1="308.50" x2="569.10" y2="312.00" stroke="#d4d4d4" stroke-width="1.93"/><line x1="569.10" y1="308.50" x2="566.63" y2="310.97" stroke="#d4d4d4" stroke-width="1.93"/><line x1="569.10" y1="308.50" x2="565.60" y2="308.50" stroke="#d4d4d4" stroke-width="1.93"/><line x1="569.10" y1="308.50" x2="566.63" y2="306.03" stroke="#d4d4d4" stroke-width="1.93"/><line x1="569.10" y1="308.50" x2="569.10" y2="305.00" stroke="#d4d4d4" stroke-width="1.93"/><line x1="569.10" y1="308.50" x2="571.57" y2="306.03" stroke="#d4d4d4" stroke-width="1.93"/><circle cx="569.10" cy="308.50" r="2.52" fill="#d4d4d4"/><circle cx="569.10" cy="308.50" r="1.05" fill="#fff"/><rect x="576.30" y="305.50" width="4.20" height="1.30" fill="#d4d4d4"/><rect x="577.10" y="306.50" width="2.60" height="3.00" fill="#d4d4d4"/><rect x="575.90" y="309.10" width="5.00" height="1.30" fill="#d4d4d4"/><line x1="578.40" y1="310.30" x2="578.40" y2="312.50" stroke="#d4d4d4" stroke-width="0.90"/>
<path d="M683.00,303.60 A20.5,20.5 0 1 1 712.00,303.60 L707.17,298.77 A14.0,14.0 0 1 0 685.25,301.35 Z" fill="#b9c41c"/><polygon points="674.02,284.11 679.21,285.21 678.02,282.39 674.81,281.29" fill="#fff"/><line x1="676.96" y1="284.73" x2="675.00" y2="284.32" stroke="#999" stroke-width="0.6"/><path d="M700.22,288.81 L677.03,284.39 L676.89,285.08 L699.87,290.47Z" fill="#5e5e5e"/>
<line x1="708.10" y1="308.50" x2="711.60" y2="308.50" stroke="#d4d4d4" stroke-width="1.93"/><line x1="708.10" y1="308.50" x2="710.57" y2="310.97" stroke="#d4d4d4" stroke-width="1.93"/><line x1="708.10" y1="308.50" x2="708.10" y2="312.00" stroke="#d4d4d4" stroke-width="1.93"/><line x1="708.10" y1="308.50" x2="705.63" y2="310.97" stroke="#d4d4d4" stroke-width="1.93"/><line x1="708.10" y1="308.50" x2="704.60" y2="308.50" stroke="#d4d4d4" stroke-width="1.93"/><line x1="708.10" y1="308.50" x2="705.63" y2="306.03" stroke="#d4d4d4" stroke-width="1.93"/><line x1="708.10" y1="308.50" x2="708.10" y2="305.00" stroke="#d4d4d4" stroke-width="1.93"/><line x1="708.10" y1="308.50" x2="710.57" y2="306.03" stroke="#d4d4d4" stroke-width="1.93"/><circle cx="708.10" cy="308.50" r="2.52" fill="#d4d4d4"/><circle cx="708.10" cy="308.50" r="1.05" fill="#fff"/><rect x="715.30" y="305.50" width="4.20" height="1.30" fill="#d4d4d4"/><rect x="716.10" y="306.50" width="2.60" height="3.00" fill="#d4d4d4"/><rect x="714.90" y="309.10" width="5.00" height="1.30" fill="#d4d4d4"/><line x1="717.40" y1="310.30" x2="717.40" y2="312.50" stroke="#d4d4d4" stroke-width="0.90"/>
<path d="M821.00,303.60 A20.5,20.5 0 1 1 850.00,303.60 L845.17,298.77 A14.0,14.0 0 1 0 823.25,301.35 Z" fill="#b9c41c"/><polygon points="817.39,304.85 821.39,301.37 818.42,300.62 815.60,302.52" fill="#fff"/><line x1="819.65" y1="302.88" x2="818.14" y2="304.19" stroke="#999" stroke-width="0.6"/><path d="M836.90,286.75 L819.42,302.61 L819.88,303.14 L838.02,288.04Z" fill="#5e5e5e"/>
<line x1="846.10" y1="308.50" x2="849.60" y2="308.50" stroke="#d4d4d4" stroke-width="1.93"/><line x1="846.10" y1="308.50" x2="848.57" y2="310.97" stroke="#d4d4d4" stroke-width="1.93"/><line x1="846.10" y1="308.50" x2="846.10" y2="312.00" stroke="#d4d4d4" stroke-width="1.93"/><line x1="846.10" y1="308.50" x2="843.63" y2="310.97" stroke="#d4d4d4" stroke-width="1.93"/><line x1="846.10" y1="308.50" x2="842.60" y2="308.50" stroke="#d4d4d4" stroke-width="1.93"/><line x1="846.10" y1="308.50" x2="843.63" y2="306.03" stroke="#d4d4d4" stroke-width="1.93"/><line x1="846.10" y1="308.50" x2="846.10" y2="305.00" stroke="#d4d4d4" stroke-width="1.93"/><line x1="846.10" y1="308.50" x2="848.57" y2="306.03" stroke="#d4d4d4" stroke-width="1.93"/><circle cx="846.10" cy="308.50" r="2.52" fill="#d4d4d4"/><circle cx="846.10" cy="308.50" r="1.05" fill="#fff"/><rect x="853.30" y="305.50" width="4.20" height="1.30" fill="#d4d4d4"/><rect x="854.10" y="306.50" width="2.60" height="3.00" fill="#d4d4d4"/><rect x="852.90" y="309.10" width="5.00" height="1.30" fill="#d4d4d4"/><line x1="855.40" y1="310.30" x2="855.40" y2="312.50" stroke="#d4d4d4" stroke-width="0.90"/>
<path d="M406.00,369.35 A20.5,20.5 0 1 1 435.00,369.35 L430.17,364.52 A14.0,14.0 0 1 0 408.25,367.10 Z" fill="#b9c41c"/><polygon points="402.39,370.60 406.39,367.12 403.42,366.37 400.60,368.27" fill="#fff"/><line x1="404.65" y1="368.63" x2="403.14" y2="369.94" stroke="#999" stroke-width="0.6"/><path d="M421.90,352.50 L404.42,368.36 L404.88,368.89 L423.02,353.79Z" fill="#5e5e5e"/>
<line x1="431.10" y1="374.25" x2="434.60" y2="374.25" stroke="#d4d4d4" stroke-width="1.93"/><line x1="431.10" y1="374.25" x2="433.57" y2="376.72" stroke="#d4d4d4" stroke-width="1.93"/><line x1="431.10" y1="374.25" x2="431.10" y2="377.75" stroke="#d4d4d4" stroke-width="1.93"/><line x1="431.10" y1="374.25" x2="428.63" y2="376.72" stroke="#d4d4d4" stroke-width="1.93"/><line x1="431.10" y1="374.25" x2="427.60" y2="374.25" stroke="#d4d4d4" stroke-width="1.93"/><line x1="431.10" y1="374.25" x2="428.63" y2="371.78" stroke="#d4d4d4" stroke-width="1.93"/><line x1="431.10" y1="374.25" x2="431.10" y2="370.75" stroke="#d4d4d4" stroke-width="1.93"/><line x1="431.10" y1="374.25" x2="433.57" y2="371.78" stroke="#d4d4d4" stroke-width="1.93"/><circle cx="431.10" cy="374.25" r="2.52" fill="#d4d4d4"/><circle cx="431.10" cy="374.25" r="1.05" fill="#fff"/><rect x="438.30" y="371.25" width="4.20" height="1.30" fill="#d4d4d4"/><rect x="439.10" y="372.25" width="2.60" height="3.00" fill="#d4d4d4"/><rect x="437.90" y="374.85" width="5.00" height="1.30" fill="#d4d4d4"/><line x1="440.40" y1="376.05" x2="440.40" y2="378.25" stroke="#d4d4d4" stroke-width="0.90"/>
<path d="M544.00,369.35 A20.5,20.5 0 1 1 573.00,369.35 L568.17,364.52 A14.0,14.0 0 1 0 546.25,367.10 Z" fill="#b9c41c"/><polygon points="540.39,370.60 544.39,367.12 541.42,366.37 538.60,368.27" fill="#fff"/><line x1="542.65" y1="368.63" x2="541.14" y2="369.94" stroke="#999" stroke-width="0.6"/><path d="M559.90,352.50 L542.42,368.36 L542.88,368.89 L561.02,353.79Z" fill="#5e5e5e"/>
<line x1="569.10" y1="374.25" x2="572.60" y2="374.25" stroke="#d4d4d4" stroke-width="1.93"/><line x1="569.10" y1="374.25" x2="571.57" y2="376.72" stroke="#d4d4d4" stroke-width="1.93"/><line x1="569.10" y1="374.25" x2="569.10" y2="377.75" stroke="#d4d4d4" stroke-width="1.93"/><line x1="569.10" y1="374.25" x2="566.63" y2="376.72" stroke="#d4d4d4" stroke-width="1.93"/><line x1="569.10" y1="374.25" x2="565.60" y2="374.25" stroke="#d4d4d4" stroke-width="1.93"/><line x1="569.10" y1="374.25" x2="566.63" y2="371.78" stroke="#d4d4d4" stroke-width="1.93"/><line x1="569.10" y1="374.25" x2="569.10" y2="370.75" stroke="#d4d4d4" stroke-width="1.93"/><line x1="569.10" y1="374.25" x2="571.57" y2="371.78" stroke="#d4d4d4" stroke-width="1.93"/><circle cx="569.10" cy="374.25" r="2.52" fill="#d4d4d4"/><circle cx="569.10" cy="374.25" r="1.05" fill="#fff"/><rect x="576.30" y="371.25" width="4.20" height="1.30" fill="#d4d4d4"/><rect x="577.10" y="372.25" width="2.60" height="3.00" fill="#d4d4d4"/><rect x="575.90" y="374.85" width="5.00" height="1.30" fill="#d4d4d4"/><line x1="578.40" y1="376.05" x2="578.40" y2="378.25" stroke="#d4d4d4" stroke-width="0.90"/>
<path d="M683.00,369.35 A20.5,20.5 0 1 1 712.00,369.35 L707.17,364.52 A14.0,14.0 0 1 0 685.25,367.10 Z" fill="#b9c41c"/><polygon points="676.12,365.75 680.84,363.34 678.14,361.90 674.95,363.06" fill="#fff"/><line x1="678.79" y1="364.38" x2="677.01" y2="365.29" stroke="#999" stroke-width="0.6"/><path d="M699.43,352.91 L678.63,364.07 L678.95,364.70 L700.20,354.43Z" fill="#5e5e5e"/>
<line x1="708.10" y1="374.25" x2="711.60" y2="374.25" stroke="#d4d4d4" stroke-width="1.93"/><line x1="708.10" y1="374.25" x2="710.57" y2="376.72" stroke="#d4d4d4" stroke-width="1.93"/><line x1="708.10" y1="374.25" x2="708.10" y2="377.75" stroke="#d4d4d4" stroke-width="1.93"/><line x1="708.10" y1="374.25" x2="705.63" y2="376.72" stroke="#d4d4d4" stroke-width="1.93"/><line x1="708.10" y1="374.25" x2="704.60" y2="374.25" stroke="#d4d4d4" stroke-width="1.93"/><line x1="708.10" y1="374.25" x2="705.63" y2="371.78" stroke="#d4d4d4" stroke-width="1.93"/><line x1="708.10" y1="374.25" x2="708.10" y2="370.75" stroke="#d4d4d4" stroke-width="1.93"/><line x1="708.10" y1="374.25" x2="710.57" y2="371.78" stroke="#d4d4d4" stroke-width="1.93"/><circle cx="708.10" cy="374.25" r="2.52" fill="#d4d4d4"/><circle cx="708.10" cy="374.25" r="1.05" fill="#fff"/><rect x="715.30" y="371.25" width="4.20" height="1.30" fill="#d4d4d4"/><rect x="716.10" y="372.25" width="2.60" height="3.00" fill="#d4d4d4"/><rect x="714.90" y="374.85" width="5.00" height="1.30" fill="#d4d4d4"/><line x1="717.40" y1="376.05" x2="717.40" y2="378.25" stroke="#d4d4d4" stroke-width="0.90"/>
<path d="M821.00,369.35 A20.5,20.5 0 1 1 850.00,369.35 L845.17,364.52 A14.0,14.0 0 1 0 823.25,367.10 Z" fill="#b9c41c"/><polygon points="813.75,364.99 818.55,362.75 815.91,361.22 812.67,362.27" fill="#fff"/><line x1="816.47" y1="363.72" x2="814.65" y2="364.57" stroke="#999" stroke-width="0.6"/><path d="M837.50,352.98 L816.32,363.41 L816.62,364.04 L838.22,354.52Z" fill="#5e5e5e"/>
<line x1="846.10" y1="374.25" x2="849.60" y2="374.25" stroke="#d4d4d4" stroke-width="1.93"/><line x1="846.10" y1="374.25" x2="848.57" y2="376.72" stroke="#d4d4d4" stroke-width="1.93"/><line x1="846.10" y1="374.25" x2="846.10" y2="377.75" stroke="#d4d4d4" stroke-width="1.93"/><line x1="846.10" y1="374.25" x2="843.63" y2="376.72" stroke="#d4d4d4" stroke-width="1.93"/><line x1="846.10" y1="374.25" x2="842.60" y2="374.25" stroke="#d4d4d4" stroke-width="1.93"/><line x1="846.10" y1="374.25" x2="843.63" y2="371.78" stroke="#d4d4d4" stroke-width="1.93"/><line x1="846.10" y1="374.25" x2="846.10" y2="370.75" stroke="#d4d4d4" stroke-width="1.93"/><line x1="846.10" y1="374.25" x2="848.57" y2="371.78" stroke="#d4d4d4" stroke-width="1.93"/><circle cx="846.10" cy="374.25" r="2.52" fill="#d4d4d4"/><circle cx="846.10" cy="374.25" r="1.05" fill="#fff"/><rect x="853.30" y="371.25" width="4.20" height="1.30" fill="#d4d4d4"/><rect x="854.10" y="372.25" width="2.60" height="3.00" fill="#d4d4d4"/><rect x="852.90" y="374.85" width="5.00" height="1.30" fill="#d4d4d4"/><line x1="855.40" y1="376.05" x2="855.40" y2="378.25" stroke="#d4d4d4" stroke-width="0.90"/>
<path d="M129.00,435.10 A20.5,20.5 0 1 1 158.00,435.10 L153.17,430.27 A14.0,14.0 0 1 0 131.25,432.85 Z" fill="#b9c41c"/><polygon points="122.95,411.45 127.65,411.45 125.30,407.37" fill="#fff"/><path d="M146.16,419.98 L122.61,418.42 L122.55,419.12 L146.02,421.67Z" fill="#5e5e5e"/>
<line x1="154.10" y1="440.00" x2="157.60" y2="440.00" stroke="#d4d4d4" stroke-width="1.93"/><line x1="154.10" y1="440.00" x2="156.57" y2="442.47" stroke="#d4d4d4" stroke-width="1.93"/><line x1="154.10" y1="440.00" x2="154.10" y2="443.50" stroke="#d4d4d4" stroke-width="1.93"/><line x1="154.10" y1="440.00" x2="151.63" y2="442.47" stroke="#d4d4d4" stroke-width="1.93"/><line x1="154.10" y1="440.00" x2="150.60" y2="440.00" stroke="#d4d4d4" stroke-width="1.93"/><line x1="154.10" y1="440.00" x2="151.63" y2="437.53" stroke="#d4d4d4" stroke-width="1.93"/><line x1="154.10" y1="440.00" x2="154.10" y2="436.50" stroke="#d4d4d4" stroke-width="1.93"/><line x1="154.10" y1="440.00" x2="156.57" y2="437.53" stroke="#d4d4d4" stroke-width="1.93"/><circle cx="154.10" cy="440.00" r="2.52" fill="#d4d4d4"/><circle cx="154.10" cy="440.00" r="1.05" fill="#fff"/><rect x="161.30" y="437.00" width="4.20" height="1.30" fill="#d4d4d4"/><rect x="162.10" y="438.00" width="2.60" height="3.00" fill="#d4d4d4"/><rect x="160.90" y="440.60" width="5.00" height="1.30" fill="#d4d4d4"/><line x1="163.40" y1="441.80" x2="163.40" y2="444.00" stroke="#d4d4d4" stroke-width="0.90"/>
<path d="M268.00,435.10 A20.5,20.5 0 1 1 297.00,435.10 L292.17,430.27 A14.0,14.0 0 1 0 270.25,432.85 Z" fill="#b9c41c"/><polygon points="300.89,405.17 296.83,408.58 299.78,409.38 302.63,407.53" fill="#fff"/><line x1="298.59" y1="407.10" x2="300.12" y2="405.82" stroke="#999" stroke-width="0.6"/><path d="M281.05,422.92 L298.81,407.37 L298.36,406.83 L279.96,421.62Z" fill="#5e5e5e"/>
<line x1="293.10" y1="440.00" x2="296.60" y2="440.00" stroke="#d4d4d4" stroke-width="1.93"/><line x1="293.10" y1="440.00" x2="295.57" y2="442.47" stroke="#d4d4d4" stroke-width="1.93"/><line x1="293.10" y1="440.00" x2="293.10" y2="443.50" stroke="#d4d4d4" stroke-width="1.93"/><line x1="293.10" y1="440.00" x2="290.63" y2="442.47" stroke="#d4d4d4" stroke-width="1.93"/><line x1="293.10" y1="440.00" x2="289.60" y2="440.00" stroke="#d4d4d4" stroke-width="1.93"/><line x1="293.10" y1="440.00" x2="290.63" y2="437.53" stroke="#d4d4d4" stroke-width="1.93"/><line x1="293.10" y1="440.00" x2="293.10" y2="436.50" stroke="#d4d4d4" stroke-width="1.93"/><line x1="293.10" y1="440.00" x2="295.57" y2="437.53" stroke="#d4d4d4" stroke-width="1.93"/><circle cx="293.10" cy="440.00" r="2.52" fill="#d4d4d4"/><circle cx="293.10" cy="440.00" r="1.05" fill="#fff"/><rect x="300.30" y="437.00" width="4.20" height="1.30" fill="#d4d4d4"/><rect x="301.10" y="438.00" width="2.60" height="3.00" fill="#d4d4d4"/><rect x="299.90" y="440.60" width="5.00" height="1.30" fill="#d4d4d4"/><line x1="302.40" y1="441.80" x2="302.40" y2="444.00" stroke="#d4d4d4" stroke-width="0.90"/>
<path d="M406.00,435.10 A20.5,20.5 0 1 1 435.00,435.10 L430.17,430.27 A14.0,14.0 0 1 0 408.25,432.85 Z" fill="#b9c41c"/><polygon points="399.72,432.60 404.31,429.95 401.54,428.65 398.41,429.98" fill="#fff"/><line x1="402.31" y1="431.10" x2="400.58" y2="432.10" stroke="#999" stroke-width="0.6"/><path d="M422.33,418.56 L402.14,430.80 L402.49,431.40 L423.18,420.04Z" fill="#5e5e5e"/>
<line x1="431.10" y1="440.00" x2="434.60" y2="440.00" stroke="#d4d4d4" stroke-width="1.93"/><line x1="431.10" y1="440.00" x2="433.57" y2="442.47" stroke="#d4d4d4" stroke-width="1.93"/><line x1="431.10" y1="440.00" x2="431.10" y2="443.50" stroke="#d4d4d4" stroke-width="1.93"/><line x1="431.10" y1="440.00" x2="428.63" y2="442.47" stroke="#d4d4d4" stroke-width="1.93"/><line x1="431.10" y1="440.00" x2="427.60" y2="440.00" stroke="#d4d4d4" stroke-width="1.93"/><line x1="431.10" y1="440.00" x2="428.63" y2="437.53" stroke="#d4d4d4" stroke-width="1.93"/><line x1="431.10" y1="440.00" x2="431.10" y2="436.50" stroke="#d4d4d4" stroke-width="1.93"/><line x1="431.10" y1="440.00" x2="433.57" y2="437.53" stroke="#d4d4d4" stroke-width="1.93"/><circle cx="431.10" cy="440.00" r="2.52" fill="#d4d4d4"/><circle cx="431.10" cy="440.00" r="1.05" fill="#fff"/><rect x="438.30" y="437.00" width="4.20" height="1.30" fill="#d4d4d4"/><rect x="439.10" y="438.00" width="2.60" height="3.00" fill="#d4d4d4"/><rect x="437.90" y="440.60" width="5.00" height="1.30" fill="#d4d4d4"/><line x1="440.40" y1="441.80" x2="440.40" y2="444.00" stroke="#d4d4d4" stroke-width="0.90"/>
<path d="M544.00,435.10 A20.5,20.5 0 1 1 573.00,435.10 L568.17,430.27 A14.0,14.0 0 1 0 546.25,432.85 Z" fill="#b9c41c"/><polygon points="576.89,436.03 572.83,432.62 572.55,435.67 574.87,438.15" fill="#fff"/><line x1="574.59" y1="434.10" x2="576.12" y2="435.38" stroke="#999" stroke-width="0.6"/><path d="M555.96,419.58 L574.36,434.37 L574.81,433.83 L557.05,418.28Z" fill="#5e5e5e"/>
<line x1="569.10" y1="440.00" x2="572.60" y2="440.00" stroke="#d4d4d4" stroke-width="1.93"/><line x1="569.10" y1="440.00" x2="571.57" y2="442.47" stroke="#d4d4d4" stroke-width="1.93"/><line x1="569.10" y1="440.00" x2="569.10" y2="443.50" stroke="#d4d4d4" stroke-width="1.93"/><line x1="569.10" y1="440.00" x2="566.63" y2="442.47" stroke="#d4d4d4" stroke-width="1.93"/><line x1="569.10" y1="440.00" x2="565.60" y2="440.00" stroke="#d4d4d4" stroke-width="1.93"/><line x1="569.10" y1="440.00" x2="566.63" y2="437.53" stroke="#d4d4d4" stroke-width="1.93"/><line x1="569.10" y1="440.00" x2="569.10" y2="436.50" stroke="#d4d4d4" stroke-width="1.93"/><line x1="569.10" y1="440.00" x2="571.57" y2="437.53" stroke="#d4d4d4" stroke-width="1.93"/><circle cx="569.10" cy="440.00" r="2.52" fill="#d4d4d4"/><circle cx="569.10" cy="440.00" r="1.05" fill="#fff"/><rect x="576.30" y="437.00" width="4.20" height="1.30" fill="#d4d4d4"/><rect x="577.10" y="438.00" width="2.60" height="3.00" fill="#d4d4d4"/><rect x="575.90" y="440.60" width="5.00" height="1.30" fill="#d4d4d4"/><line x1="578.40" y1="441.80" x2="578.40" y2="444.00" stroke="#d4d4d4" stroke-width="0.90"/>
<path d="M683.00,435.10 A20.5,20.5 0 1 1 712.00,435.10 L707.17,430.27 A14.0,14.0 0 1 0 685.25,432.85 Z" fill="#b9c41c"/><polygon points="716.41,435.38 712.24,432.11 712.07,435.17 714.47,437.57" fill="#fff"/><line x1="714.05" y1="433.53" x2="715.62" y2="434.76" stroke="#999" stroke-width="0.6"/><path d="M694.93,419.67 L713.83,433.80 L714.26,433.25 L695.97,418.33Z" fill="#5e5e5e"/>
<line x1="708.10" y1="440.00" x2="711.60" y2="440.00" stroke="#d4d4d4" stroke-width="1.93"/><line x1="708.10" y1="440.00" x2="710.57" y2="442.47" stroke="#d4d4d4" stroke-width="1.93"/><line x1="708.10" y1="440.00" x2="708.10" y2="443.50" stroke="#d4d4d4" stroke-width="1.93"/><line x1="708.10" y1="440.00" x2="705.63" y2="442.47" stroke="#d4d4d4" stroke-width="1.93"/><line x1="708.10" y1="440.00" x2="704.60" y2="440.00" stroke="#d4d4d4" stroke-width="1.93"/><line x1="708.10" y1="440.00" x2="705.63" y2="437.53" stroke="#d4d4d4" stroke-width="1.93"/><line x1="708.10" y1="440.00" x2="708.10" y2="436.50" stroke="#d4d4d4" stroke-width="1.93"/><line x1="708.10" y1="440.00" x2="710.57" y2="437.53" stroke="#d4d4d4" stroke-width="1.93"/><circle cx="708.10" cy="440.00" r="2.52" fill="#d4d4d4"/><circle cx="708.10" cy="440.00" r="1.05" fill="#fff"/><rect x="715.30" y="437.00" width="4.20" height="1.30" fill="#d4d4d4"/><rect x="716.10" y="438.00" width="2.60" height="3.00" fill="#d4d4d4"/><rect x="714.90" y="440.60" width="5.00" height="1.30" fill="#d4d4d4"/><line x1="717.40" y1="441.80" x2="717.40" y2="444.00" stroke="#d4d4d4" stroke-width="0.90"/>
<path d="M821.00,435.10 A20.5,20.5 0 1 1 850.00,435.10 L845.17,430.27 A14.0,14.0 0 1 0 823.25,432.85 Z" fill="#b9c41c"/><polygon points="813.25,429.59 818.16,427.61 815.60,425.93 812.32,426.81" fill="#fff"/><line x1="816.03" y1="428.47" x2="814.17" y2="429.22" stroke="#999" stroke-width="0.6"/><path d="M837.59,418.84 L815.90,428.14 L816.16,428.79 L838.23,420.41Z" fill="#5e5e5e"/>
<line x1="846.10" y1="440.00" x2="849.60" y2="440.00" stroke="#d4d4d4" stroke-width="1.93"/><line x1="846.10" y1="440.00" x2="848.57" y2="442.47" stroke="#d4d4d4" stroke-width="1.93"/><line x1="846.10" y1="440.00" x2="846.10" y2="443.50" stroke="#d4d4d4" stroke-width="1.93"/><line x1="846.10" y1="440.00" x2="843.63" y2="442.47" stroke="#d4d4d4" stroke-width="1.93"/><line x1="846.10" y1="440.00" x2="842.60" y2="440.00" stroke="#d4d4d4" stroke-width="1.93"/><line x1="846.10" y1="440.00" x2="843.63" y2="437.53" stroke="#d4d4d4" stroke-width="1.93"/><line x1="846.10" y1="440.00" x2="846.10" y2="436.50" stroke="#d4d4d4" stroke-width="1.93"/><line x1="846.10" y1="440.00" x2="848.57" y2="437.53" stroke="#d4d4d4" stroke-width="1.93"/><circle cx="846.10" cy="440.00" r="2.52" fill="#d4d4d4"/><circle cx="846.10" cy="440.00" r="1.05" fill="#fff"/><rect x="853.30" y="437.00" width="4.20" height="1.30" fill="#d4d4d4"/><rect x="854.10" y="438.00" width="2.60" height="3.00" fill="#d4d4d4"/><rect x="852.90" y="440.60" width="5.00" height="1.30" fill="#d4d4d4"/><line x1="855.40" y1="441.80" x2="855.40" y2="444.00" stroke="#d4d4d4" stroke-width="0.90"/>
</svg>
<div class="th" style="left:58.3px;top:510px;letter-spacing:-0.35px">Channel</div>
<div class="th" style="left:214px;top:510px">ID</div>
<div class="th" style="left:303.3px;top:510px;letter-spacing:-0.2px">Last Value</div>
<div class="th" style="left:499px;top:510px">Minimum</div>
<div class="th" style="left:651.7px;top:510px">Maximum</div>
<div class="tl" style="top:524px"></div>
<div class="tl" style="top:551px"></div>
<div class="tl" style="top:578px"></div>
<div class="tl" style="top:605px"></div>
<div class="tl" style="top:632px"></div>
<div class="tl" style="top:659px"></div>
<div class="tl" style="top:686px"></div>
<div class="tl" style="top:713px"></div>
<div class="tl" style="top:740px"></div>
<div class="td" style="left:58.3px;top:536.8px;letter-spacing:-0.05px">Avg Bytes Per Read</div>
<div class="td" style="left:214px;top:536.8px">7</div>
<div class="td" style="left:287.2px;width:100px;text-align:center;top:536.8px;letter-spacing:0.45px">88,415 #</div>
<div class="td" style="left:462.5px;width:101.5px;text-align:right;top:536.8px;letter-spacing:0.45px">36,571 #</div>
<div class="td" style="left:618.5px;width:101.5px;text-align:right;top:536.8px;letter-spacing:0.45px">134,358 #</div>
<div class="td" style="left:58.3px;top:563.8px;letter-spacing:-0.05px">Avg Bytes Per Transfer</div>
<div class="td" style="left:214px;top:563.8px">8</div>
<div class="td" style="left:287.2px;width:100px;text-align:center;top:563.8px;letter-spacing:0.45px">22,516 #</div>
<div class="td" style="left:462.5px;width:101.5px;text-align:right;top:563.8px;letter-spacing:0.45px">18,388 #</div>
<div class="td" style="left:618.5px;width:101.5px;text-align:right;top:563.8px;letter-spacing:0.45px">72,080 #</div>
<div class="td" style="left:58.3px;top:590.8px;letter-spacing:-0.05px">Avg Bytes Per Write</div>
<div class="td" style="left:214px;top:590.8px">9</div>
<div class="td" style="left:287.2px;width:100px;text-align:center;top:590.8px;letter-spacing:0.45px">16,902 #</div>
<div class="td" style="left:462.5px;width:101.5px;text-align:right;top:590.8px;letter-spacing:0.45px">15,741 #</div>
<div class="td" style="left:618.5px;width:101.5px;text-align:right;top:590.8px;letter-spacing:0.45px">71,596 #</div>
<div class="td" style="left:58.3px;top:617.8px;letter-spacing:-0.05px">Avg Queue Length</div>
<div class="td" style="left:214px;top:617.8px">13</div>
<div class="td" style="left:287.2px;width:100px;text-align:center;top:617.8px;letter-spacing:0.45px">0.06 #</div>
<div class="td" style="left:462.5px;width:101.5px;text-align:right;top:617.8px;letter-spacing:0.45px">0.02 #</div>
<div class="td" style="left:618.5px;width:101.5px;text-align:right;top:617.8px;letter-spacing:0.45px">0.30 #</div>
<div class="td" style="left:58.3px;top:644.8px;letter-spacing:-0.05px">Avg Read Queue</div>
<div class="td" style="left:214px;top:644.8px">14</div>
<div class="td" style="left:287.2px;width:100px;text-align:center;top:644.8px;letter-spacing:0.45px">&lt; 0.01 #</div>
<div class="td" style="left:462.5px;width:101.5px;text-align:right;top:644.8px;letter-spacing:0.45px">&lt; 0.01 #</div>
<div class="td" style="left:618.5px;width:101.5px;text-align:right;top:644.8px;letter-spacing:0.45px">0.24 #</div>
<div class="td" style="left:58.3px;top:671.8px;letter-spacing:-0.05px">Avg Read Time</div>
<div class="td" style="left:214px;top:671.8px">10</div>
<div class="td" style="left:287.2px;width:100px;text-align:center;top:671.8px;letter-spacing:0.45px">5 msec</div>
<div class="td" style="left:462.5px;width:101.5px;text-align:right;top:671.8px;letter-spacing:0.45px">2 msec</div>
<div class="td" style="left:618.5px;width:101.5px;text-align:right;top:671.8px;letter-spacing:0.45px">8 msec</div>
<div class="td" style="left:58.3px;top:698.8px;letter-spacing:-0.05px">Avg Transfer Time</div>
<div class="td" style="left:214px;top:698.8px">11</div>
<div class="td" style="left:287.2px;width:100px;text-align:center;top:698.8px;letter-spacing:0.45px">5 msec</div>
<div class="td" style="left:462.5px;width:101.5px;text-align:right;top:698.8px;letter-spacing:0.45px">2 msec</div>
<div class="td" style="left:618.5px;width:101.5px;text-align:right;top:698.8px;letter-spacing:0.45px">9 msec</div>
<div class="td" style="left:58.3px;top:725.8px;letter-spacing:-0.05px">Avg Write Queue</div>
<div class="td" style="left:214px;top:725.8px">15</div>
<div class="td" style="left:287.2px;width:100px;text-align:center;top:725.8px;letter-spacing:0.45px">0.05 #</div>
<div class="td" style="left:462.5px;width:101.5px;text-align:right;top:725.8px;letter-spacing:0.45px">0.02 #</div>
<div class="td" style="left:618.5px;width:101.5px;text-align:right;top:725.8px;letter-spacing:0.45px">0.12 #</div>
<svg class="a" style="left:0;top:0" width="900" height="745"><path d="M105.6,515.6 L112,515.6 L108.8,519.2Z" fill="#222"/><path d="M229.5,514.1 L232.7,510.5 L235.9,514.1Z M229.5,515.9 L232.7,519.5 L235.9,515.9Z" fill="#d0d0d0"/><path d="M362.8,514.1 L366.0,510.5 L369.2,514.1Z M362.8,515.9 L366.0,519.5 L369.2,515.9Z" fill="#d0d0d0"/><path d="M552.8,514.1 L556.0,510.5 L559.1999999999999,514.1Z M552.8,515.9 L556.0,519.5 L559.1999999999999,515.9Z" fill="#d0d0d0"/><path d="M709.5,514.1 L712.7,510.5 L715.9,514.1Z M709.5,515.9 L712.7,519.5 L715.9,515.9Z" fill="#d0d0d0"/><circle cx="805.7" cy="538.6" r="2.7" fill="none" stroke="#333" stroke-width="2.0"/><circle cx="800.4" cy="543.7" r="1.5" fill="none" stroke="#333" stroke-width="1.3"/><circle cx="805.7" cy="565.6" r="2.7" fill="none" stroke="#333" stroke-width="2.0"/><circle cx="800.4" cy="570.7" r="1.5" fill="none" stroke="#333" stroke-width="1.3"/><circle cx="805.7" cy="592.6" r="2.7" fill="none" stroke="#333" stroke-width="2.0"/><circle cx="800.4" cy="597.7" r="1.5" fill="none" stroke="#333" stroke-width="1.3"/><circle cx="805.7" cy="619.6" r="2.7" fill="none" stroke="#333" stroke-width="2.0"/><circle cx="800.4" cy="624.7" r="1.5" fill="none" stroke="#333" stroke-width="1.3"/><circle cx="805.7" cy="646.6" r="2.7" fill="none" stroke="#333" stroke-width="2.0"/><circle cx="800.4" cy="651.7" r="1.5" fill="none" stroke="#333" stroke-width="1.3"/><circle cx="805.7" cy="673.6" r="2.7" fill="none" stroke="#333" stroke-width="2.0"/><circle cx="800.4" cy="678.7" r="1.5" fill="none" stroke="#333" stroke-width="1.3"/><circle cx="805.7" cy="700.6" r="2.7" fill="none" stroke="#333" stroke-width="2.0"/><circle cx="800.4" cy="705.7" r="1.5" fill="none" stroke="#333" stroke-width="1.3"/><circle cx="805.7" cy="727.6" r="2.7" fill="none" stroke="#333" stroke-width="2.0"/><circle cx="800.4" cy="732.7" r="1.5" fill="none" stroke="#333" stroke-width="1.3"/></svg>
<div id="frame"></div>
</body></html>
